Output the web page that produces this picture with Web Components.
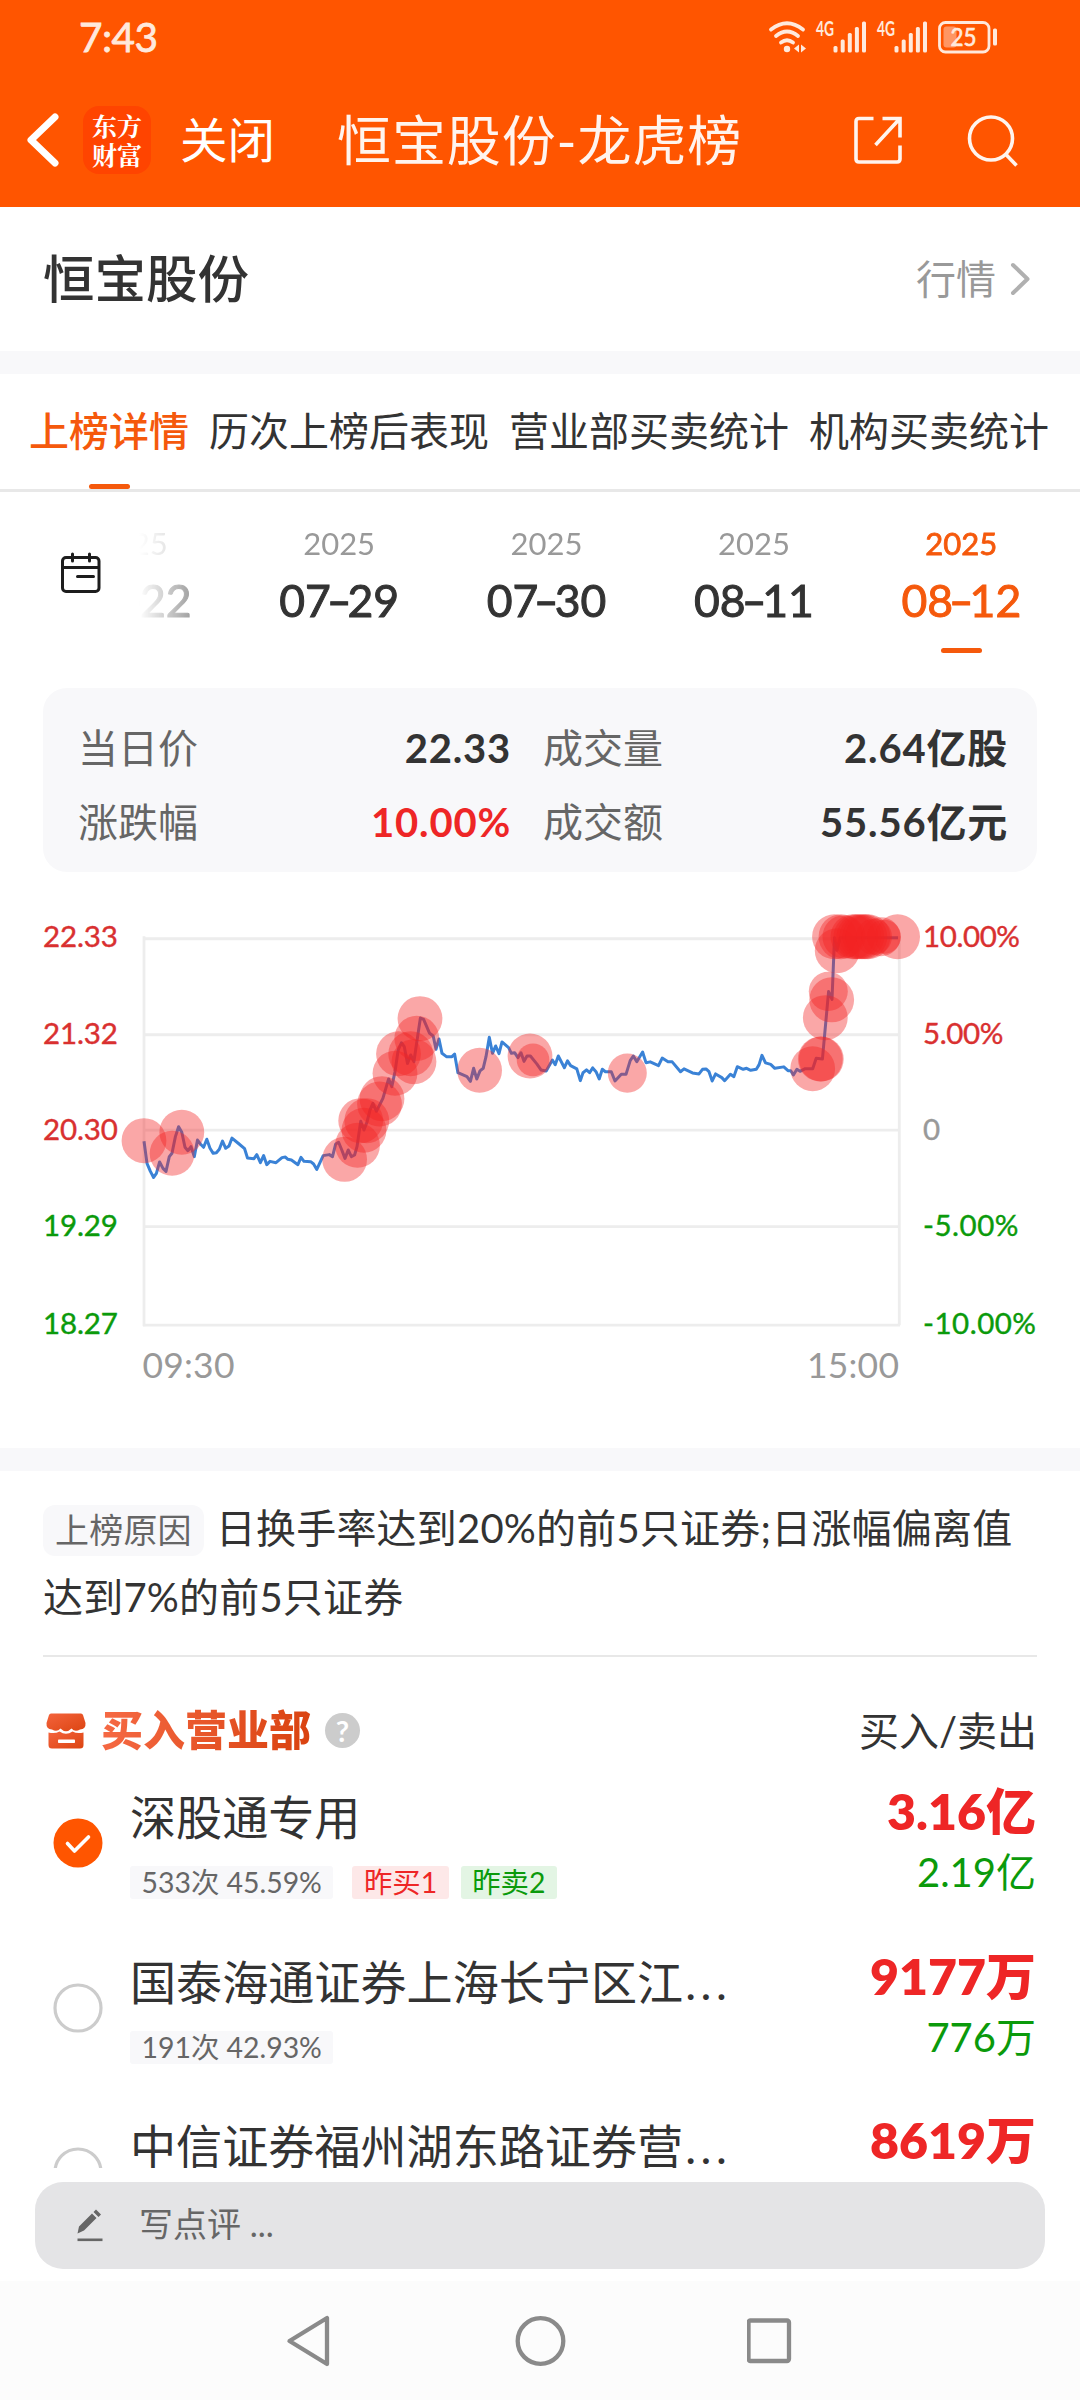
<!DOCTYPE html>
<html lang="zh-CN">
<head>
<meta charset="UTF-8">
<meta name="viewport" content="width=device-width, initial-scale=1.0">
<title>恒宝股份-龙虎榜</title>
<style>
  html, body {
    margin: 0;
    padding: 0;
  }

  body {
    --orange: #ff5500;
    --accent: #f5590c;
    --red: #ee2626;
    --green: #0b9a0b;
    --text: #333;
    --muted: #999;
    --panel: #f8f8fa;
    width: 1080px;
    height: 2400px;
    overflow: hidden;
    background: #fff;
    color: var(--text);
    font-family: Lato, "Noto Sans CJK SC", sans-serif;
    font-variant-ligatures: none;
  }
</style>
</head>
<body>
<lhb-app></lhb-app>

<script>
// Small helper: attach an open shadow root and fill it
class BaseElement extends HTMLElement {
    constructor() {
        super();
        this.attachShadow({ mode: 'open' });
    }

    connectedCallback() {
        this.shadowRoot.innerHTML = this.render();
    }
}

class StatusBar extends BaseElement {
    signal() {
        return `
      <svg width="51" height="32" viewBox="0 0 51 32" fill="#ffe9dc">
        <text x="0" y="14.5" font-size="20" font-weight="700" textLength="18" lengthAdjust="spacingAndGlyphs">4G</text>
        <rect x="17.5" y="25" width="4" height="6.5" rx="1.5"/>
        <rect x="24.7" y="18.5" width="4" height="13" rx="1.5"/>
        <rect x="31.8" y="12" width="4" height="19.5" rx="1.5"/>
        <rect x="38.9" y="6" width="4" height="25.5" rx="1.5"/>
        <rect x="46" y="0.5" width="4" height="31" rx="1.5"/>
      </svg>`;
    }

    render() {
        return `
      <style>
        :host {
          display: flex;
          align-items: center;
          justify-content: space-between;
          height: 74px;
          padding: 0 81px 0 79px;
          background: var(--orange);
          color: #ffe9dc;
        }
        .time { font-size: 40.5px; line-height: 74px; letter-spacing: -0.5px; -webkit-text-stroke: 0.8px; }
        .icons { display: flex; gap: 10px; }
        svg { display: block; overflow: visible; }
      </style>
      <span class="time">7:43</span>
      <div class="icons">
        <svg width="37" height="32" viewBox="0 0 37 32" fill="none" stroke="#ffe9dc" stroke-width="3.8" stroke-linecap="round">
          <path d="M2 8.5Q18 -4 34 8.5M7 15Q18 6 29 15M12 21.5Q18 17 24 21.5"/>
          <circle cx="18" cy="28" r="3.2" fill="#ffe9dc" stroke="none"/>
          <path d="M30 23.5v8l-5-4zM32 23.5v8l5-4z" fill="#ffe9dc" stroke="none"/>
        </svg>
        ${this.signal()}${this.signal()}
        <svg width="61" height="32" viewBox="0 0 61 32">
          <rect x="1.5" y="1.5" width="49.5" height="29.5" rx="6" fill="none" stroke="#ffe9dc" stroke-width="2.8"/>
          <rect x="5.5" y="5.5" width="13" height="21" rx="3" fill="#ff9663"/>
          <text x="12.5" y="25" font-size="25" fill="#ffe9dc" stroke="#ffe9dc" stroke-width="0.7" textLength="26" lengthAdjust="spacingAndGlyphs">25</text>
          <rect x="55" y="7.5" width="4" height="17" rx="1.5" fill="#ffe9dc"/>
        </svg>
      </div>`;
    }
}
customElements.define('status-bar', StatusBar);

class AppHeader extends BaseElement {
    render() {
        return `
      <style>
        :host {
          display: flex;
          align-items: center;
          height: 133px;
          box-sizing: border-box;
          padding: 0 0 1px 24px;
          background: var(--orange);
          color: #fff;
          line-height: 70px;
        }
        svg { display: block; flex: none; }
        .logo {
          display: flex;
          flex-direction: column;
          justify-content: center;
          width: 68px;
          height: 68px;
          margin-left: 23px;
          border-radius: 16px;
          background: #ff4400;
          font-family: "Noto Serif CJK SC", "Noto Sans CJK SC", sans-serif;
          font-size: 25px;
          font-weight: 700;
          line-height: 30px;
          text-align: center;
        }
        .logo span { margin-top: -1px; }
        .close { margin-left: 29px; font-size: 47.5px; white-space: nowrap; }
        .title { flex: 1; margin: 2px 0 0 62px; font-size: 54px; letter-spacing: 0.9px; white-space: nowrap; color: #fff4ee; }
        .actions { display: flex; align-items: center; gap: 65px; padding-right: 60px; }
      </style>
      <svg width="36" height="58" viewBox="0 0 36 58" fill="none" stroke="#fff" stroke-width="7" stroke-linecap="round" stroke-linejoin="round">
        <path d="M31 6L7 29l24 23"/>
      </svg>
      <div class="logo"><span>东方</span><span>财富</span></div>
      <span class="close">关闭</span>
      <span class="title"><slot></slot></span>
      <div class="actions">
        <svg width="48" height="49" viewBox="0 0 48 49" fill="none" stroke="#fff4ee" stroke-width="3.6">
          <path d="M19.500 2.500H5Q2 2.500 2 5.500V43Q2 46 5 46H43Q46 46 46 43V29.500M28.500 2.500H46V21.500M45 3.500L21.500 29"/>
        </svg>
        <svg width="53" height="53" viewBox="0 0 53 53" fill="none" stroke="#fff4ee" stroke-width="3.6">
          <circle cx="24" cy="24.500" r="21.500"/>
          <path d="M38.500 40L49.500 51.500"/>
        </svg>
      </div>`;
    }
}
customElements.define('app-header', AppHeader);

class StockTitle extends BaseElement {
    render() {
        return `
      <style>
        :host {
          display: flex;
          align-items: center;
          justify-content: space-between;
          height: 144px;
          box-sizing: border-box;
          padding: 0 49px 0 43px;
          line-height: 70px;
        }
        .name { margin-top: -2px; font-size: 51.5px; font-weight: 500; }
        .more { display: flex; align-items: center; gap: 14px; font-size: 40px; color: var(--muted); }
      </style>
      <span class="name"><slot></slot></span>
      <span class="more">行情
        <svg width="21" height="34" viewBox="0 0 21 34" fill="none" stroke="#b0b0b0" stroke-width="4" stroke-linecap="round" stroke-linejoin="round">
          <path d="M3 3l14.500 14L3 31"/>
        </svg>
      </span>`;
    }
}
customElements.define('stock-title', StockTitle);

class SectionGap extends BaseElement {
    render() {
        return `<style>:host { display: block; height: 23px; background: var(--panel); }</style>`;
    }
}
customElements.define('section-gap', SectionGap);

class TabBar extends BaseElement {
    render() {
        const tabs = this.getAttribute('tabs').split(',');
        return `
      <style>
        :host {
          display: flex;
          gap: 20px;
          height: 118px;
          box-sizing: border-box;
          padding: 0 29px;
          border-bottom: 3px solid #e8e8e8;
          font-size: 40px;
          white-space: nowrap;
        }
        .tab { display: flex; flex-direction: column; align-items: center; }
        .label { height: 110px; line-height: 115px; }
        .active { color: var(--accent); font-weight: 500; }
        .active::after { content: ""; width: 41px; height: 5px; border-radius: 3px; background: var(--accent); }
      </style>
      ${tabs.map((t, i) => `<div class="tab ${i === 0 ? 'active' : ''}"><span class="label">${t}</span></div>`).join('')}`;
    }
}
customElements.define('tab-bar', TabBar);

class DateItem extends BaseElement {
    render() {
        const [month, day] = this.getAttribute('day').split('-');
        return `
      <style>
        :host {
          display: flex;
          flex-direction: column;
          align-items: center;
          flex: none;
          width: 207.4px;
          padding-top: 33px;
        }
        .year { font-size: 31px; line-height: 36px; color: var(--muted); }
        .day { margin-top: 13px; font-size: 44.5px; line-height: 52px; -webkit-text-stroke: 1px; }
        /* the dash is drawn a little wider than the font's own hyphen */
        .dash { display: inline-block; transform: scaleX(1.5); }
        :host([active]) .year { color: var(--accent); -webkit-text-stroke: 0.8px; }
        :host([active]) .day { color: var(--accent); }
        :host([active])::after { content: ""; width: 41px; height: 5px; margin-top: 22px; border-radius: 3px; background: var(--accent); }
      </style>
      <span class="year">${this.getAttribute('year')}</span>
      <span class="day">${month}<span class="dash">-</span>${day}</span>`;
    }
}
customElements.define('date-item', DateItem);

class DateStrip extends BaseElement {
    render() {
        return `
      <style>
        :host { display: flex; height: 196px; }
        .calendar { flex: none; margin: 59px 37px 0 59px; }
        .scroller {
          display: flex;
          flex: 1;
          justify-content: flex-end;
          overflow: hidden;
          padding-right: 15px;
          -webkit-mask-image: linear-gradient(to right, transparent, #000 112px);
          mask-image: linear-gradient(to right, transparent, #000 112px);
        }
      </style>
      <svg class="calendar" width="43" height="43" viewBox="0 0 43 43" fill="none" stroke="#1d1d1d" stroke-width="3" stroke-linecap="round">
        <rect x="3.500" y="6.500" width="36.500" height="34" rx="3.500"/>
        <path d="M4 16.500H39M13.500 3v7M30.500 3v7M18.500 25.500H34.500"/>
      </svg>
      <div class="scroller"><slot></slot></div>`;
    }
}
customElements.define('date-strip', DateStrip);

class SummaryCard extends BaseElement {
    render() {
        return `
      <style>
        :host {
          display: grid;
          grid-template-columns: 433px 1fr;
          grid-auto-rows: 74px;
          column-gap: 32px;
          height: 184px;
          box-sizing: border-box;
          margin: 0 43px;
          padding: 23px 29px 0 35px;
          border-radius: 24px;
          background: var(--panel);
          font-size: 40px;
          line-height: 74px;
        }
        div { display: flex; justify-content: space-between; }
        span { color: #666; }
        b { font-weight: 700; letter-spacing: 0.8px; }
        .up { color: var(--red); }
      </style>
      <div><span>当日价</span><b>22.33</b></div>
      <div><span>成交量</span><b>2.64亿股</b></div>
      <div><span>涨跌幅</span><b class="up">10.00%</b></div>
      <div><span>成交额</span><b>55.56亿元</b></div>`;
    }
}
customElements.define('summary-card', SummaryCard);

// Intraday price line, x/y in chart units
const PRICE_LINE = [
    144,250, 147,272, 150.4,280, 153.6,286, 156.4,282, 159.6,270.6, 163,277, 166,280, 169.3,265.3, 172,262,
    175.4,245.4, 178.6,235.5, 181.8,241, 185,256, 187.9,259.4, 191,255.4, 194.3,265.3, 197.5,248.8, 200.4,252.7,
    203.6,256, 206.8,248, 210,257, 213.2,262, 216.4,261.4, 219.3,258, 222.5,249.8, 225.7,257, 229,254.7,
    232,246.8, 238.2,252, 244.6,257.4, 247.5,266.7, 254,267.3, 256.8,263.3, 260.4,271.3, 263.6,264.3, 266.8,273.3,
    270,270, 276,271.3, 282,266.3, 285.4,265.7, 287.9,268, 291.4,268.7, 297.9,273.3, 301,266, 304,270,
    310.7,270.3, 313.6,272.6, 316.8,278, 323.2,264.3, 329.3,263.3, 332.5,265.3, 335.7,252.7, 338.6,251,
    341.8,258.7, 345,267, 348.2,258.7, 351.4,265.3, 354.6,263.7, 357,255.4, 360.7,230.2, 364,238.8, 367.1,230.5,
    370,219, 372.9,212.3, 376.4,220.2, 382.9,207.3, 388.6,188, 391.8,195.7, 395,180.8, 398.2,159.2, 401.4,152,
    404.3,155.9, 407.5,172.5, 410.7,164.2, 413.9,170.8, 417.1,149.3, 420.4,127.4, 423.6,128.7, 429.6,142.6,
    433.2,145.3, 436,158.5, 439,148.3, 442,162.5, 446.4,165.8, 452,165.8, 454.6,163.2, 457.9,181.8, 467,185.7,
    470.4,190.4, 473.6,177.4, 476.8,188, 480,180, 483.2,177.4, 486,165.8, 489.3,146.6, 492.5,162.5, 495.7,155.2,
    499,162.9, 502,151.2, 508.6,156.9, 511.4,162.5, 514.6,161.9, 517.9,166.8, 521,161.9, 524,170.5, 527,165.2,
    530.4,165.2, 536.8,173, 541,179, 546.2,180, 552.4,169.2, 555.2,173.8, 558.3,165.2, 564.4,176.8, 567.5,170,
    570.6,174.8, 576.8,178, 580.3,189.7, 583,181.8, 586.5,179, 589.6,181.8, 592.7,177, 596,180.8, 599.2,188,
    602.3,178.4, 605.4,180.8, 611.3,180.8, 615,190, 621.3,183.4, 626,183.4, 630.2,169.8, 633.3,165.2, 636.8,170.8,
    642.6,161.2, 646,171.8, 650.2,171, 658.5,174.8, 662.2,167.2, 668,171, 672.2,171, 680.5,180.8, 684,178,
    692.5,182, 699,183, 702.5,178.4, 706,178, 709,180.8, 712.2,190, 715.6,183, 721.8,186.7, 724.6,189.7,
    730.4,183.4, 733.9,185.7, 737.3,175.8, 743.2,178.4, 746.6,177.4, 750.7,179.4, 756.3,178.4, 759,174,
    762,164.5, 765.5,172, 770.7,173.5, 774.8,177.4, 783.8,176, 788,179.8, 790.7,179.8, 793.4,184, 796.9,178.4,
    800,180.4, 805.2,177.8, 812.7,177.8, 816.2,167.5, 822.4,168.2, 828.6,101, 832,108.8, 834.5,47.4, 837,60,
    840,47.4, 898,47.4,
];

// Large-order markers: [x, y, radius]
const MARKERS = [
    [144, 249.4], [172.1, 262], [181.8, 241], [344.6, 268], [357.5, 254], [360.7, 229.5], [364, 239], [366.8, 229.5],
    [382, 207.6], [379.5, 213], [395, 182.4], [398.5, 163], [410.7, 163], [414, 170.8], [416.8, 147.6], [420, 128],
    [479.6, 179.4], [530, 165.2], [533, 169, 16.3], [627.3, 182.2, 19.5], [812.7, 177.8], [821.3, 168.2],
    [820.3, 168.2], [825.3, 127], [828.3, 100.8, 19.5], [831.7, 109.3], [837.2, 60.4], [834.5, 46.5],
    [841, 46.5], [844, 46.5, 21.5], [853, 46.5], [856, 46.5], [859, 46.5], [862, 46.5], [865, 46.5], [868, 46.5],
    [874, 46.5, 18], [881, 46.5, 19.5], [884, 46.5, 17], [897.6, 46.5],
];

class PriceChart extends BaseElement {
    render() {
        const rows = [48.5, 144, 239, 335, 433];
        const textY = [56.3, 153, 248.7, 344.7, 441.3];
        // [price, percent, percent text width]
        const labels = [
            ['22.33', '10.00%', 97],
            ['21.32', '5.00%', 80.5],
            ['20.30', '0', 17],
            ['19.29', '-5.00%', 95.5],
            ['18.27', '-10.00%', 113],
        ];
        const leftColors = ['#d93030', '#d93030', '#d93030', '#0b9a0b', '#0b9a0b'];
        const rightColors = ['#d93030', '#d93030', '#999', '#0b9a0b', '#0b9a0b'];
        return `
      <style>
        :host { display: block; height: 576px; }
        svg { display: block; margin-top: 18px; }
      </style>
      <svg width="1080" height="540" viewBox="0 0 1080 537.3" preserveAspectRatio="none" font-size="29.5">
        <g stroke="#ededed" stroke-width="2.8">
          ${rows.map(y => `<path d="M143 ${y}H900"/>`).join('')}
          <path d="M144 46V434M899.3 46V433"/>
        </g>
        <g stroke-width="0.4">
          ${labels.map(([price, pct, w], i) => `
          <text x="43" y="${textY[i]}" fill="${leftColors[i]}" stroke="${leftColors[i]}" textLength="75">${price}</text>
          <text x="923" y="${textY[i]}" fill="${rightColors[i]}" stroke="${rightColors[i]}" textLength="${w}">${pct}</text>`).join('')}
        </g>
        <g font-size="35.5" fill="#999">
          <text x="142.5" y="485.5" textLength="92">09:30</text>
          <text x="899" y="485.5" text-anchor="end" textLength="92">15:00</text>
        </g>
        <polyline points="${PRICE_LINE.join(' ')}" fill="none" stroke="#3a82d6" stroke-width="3" stroke-linejoin="round"/>
        <g fill="#f22424" fill-opacity="0.4">
          ${MARKERS.map(([x, y, r = 22.4]) => `<circle cx="${x}" cy="${y}" r="${r}"/>`).join('')}
        </g>
      </svg>`;
    }
}
customElements.define('price-chart', PriceChart);

class ReasonBox extends BaseElement {
    render() {
        return `
      <style>
        :host {
          display: block;
          height: 186px;
          box-sizing: border-box;
          margin: 0 38px 0 43px;
          padding-top: 23px;
          font-size: 40px;
          line-height: 69px;
          letter-spacing: 0.2px;
        }
        .text { height: 161px; margin-right: 5px; border-bottom: 2px solid #e8e8e8; }
        .badge {
          display: inline-block;
          height: 51px;
          margin-right: 12px;
          padding: 0 12px;
          border-radius: 12px;
          background: var(--panel);
          color: #666;
          font-size: 34px;
          line-height: 49px;
        }
      </style>
      <div class="text"><span class="badge">上榜原因</span><slot></slot></div>`;
    }
}
customElements.define('reason-box', ReasonBox);

class BrokerHeading extends BaseElement {
    render() {
        return `
      <style>
        :host {
          display: flex;
          align-items: center;
          height: 106px;
          box-sizing: border-box;
          margin: 0 43px;
          padding: 41px 0 0 3px;
          font-size: 40px;
        }
        svg { display: block; flex: none; }
        .title {
          margin: -5px 0 0 15px;
          font-family: "Noto Sans CJK SC", sans-serif;
          font-size: 42px;
          font-weight: 900;
          line-height: 50px;
          background: linear-gradient(100deg, #f66a45, #d9420f);
          -webkit-background-clip: text;
          background-clip: text;
          color: transparent;
          white-space: nowrap;
        }
        .help {
          width: 35px;
          height: 35px;
          margin-left: 14px;
          border-radius: 50%;
          background: #ccc;
          color: #fff;
          font-size: 29px;
          font-weight: 700;
          line-height: 35px;
          text-align: center;
        }
        .sides { margin-left: auto; line-height: 50px; white-space: nowrap; }
      </style>
      <svg width="40" height="36" viewBox="0 0 40 36">
        <defs>
          <linearGradient id="g" x1="0" y1="0" x2="1" y2="1">
            <stop offset="0" stop-color="#f4633c"/>
            <stop offset="1" stop-color="#dc4512"/>
          </linearGradient>
        </defs>
        <path fill="url(#g)" d="M5 .5H35Q36.500 .5 37 2L39.500 10Q40 16 34 16.500Q29 19.500 25.500 15.500Q20 21 14.500 15.500Q11 19.500 6 16.500Q0 16 .5 10L3 2Q3.500 .5 5 .5z"/>
        <path fill="url(#g)" d="M2.500 19.500Q9 21 13.500 18.500Q20 23 26.500 18.500Q31 21 37.500 19.500V32Q37.500 35.500 34 35.500H6Q2.500 35.500 2.500 32z"/>
        <rect x="12" y="26.500" width="17" height="3.500" rx=".8" fill="#fff"/>
      </svg>
      <span class="title"><slot></slot></span>
      <span class="help">?</span>
      <span class="sides">买入/卖出</span>`;
    }
}
customElements.define('broker-heading', BrokerHeading);

class BrokerTag extends BaseElement {
    render() {
        return `
      <style>
        :host {
          display: block;
          height: 33px;
          padding: 0 11.5px;
          border-radius: 3px;
          background: var(--panel);
          color: #666;
          font-size: 28.4px;
          line-height: 33px;
          white-space: nowrap;
        }
        :host([kind="buy"]) { margin-left: 19px; background: #fde8e8; color: var(--red); }
        :host([kind="sell"]) { margin-left: 12px; background: #e3f5e4; color: var(--green); }
      </style>
      <slot></slot>`;
    }
}
customElements.define('broker-tag', BrokerTag);

class BrokerRow extends BaseElement {
    render() {
        const checked = this.hasAttribute('checked');
        const mark = checked
            ? '<circle cx="25" cy="25" r="24.5" fill="#ff5500"/><path d="M14.5 25.5l7 7.5 14-14" fill="none" stroke="#fff" stroke-width="3.6" stroke-linecap="round" stroke-linejoin="round"/>'
            : '<circle cx="25" cy="25" r="23" fill="none" stroke="#ccc" stroke-width="3.2"/>';
        return `
      <style>
        :host {
          display: flex;
          flex: none;
          height: 164.5px;
          margin: 0 44px 0 53px;
        }
        svg { flex: none; margin-top: 55px; }
        .info { flex: 1; margin-left: 27px; padding-top: 24px; }
        .name { height: 60px; font-size: 46.1px; line-height: 60px; white-space: nowrap; }
        .tags { display: flex; margin-top: 19px; }
        .amounts { display: flex; flex-direction: column; align-items: flex-end; padding-top: 18px; white-space: nowrap; }
        .buy { color: var(--red); font-size: 50px; font-weight: 800; line-height: 60px; }
        .sell { color: var(--green); font-size: 40px; line-height: 50px; margin-top: 6px; }
      </style>
      <svg width="50" height="50" viewBox="0 0 50 50">${mark}</svg>
      <div class="info">
        <div class="name"><slot name="name"></slot></div>
        <div class="tags"><slot></slot></div>
      </div>
      <div class="amounts">
        <span class="buy">${this.getAttribute('buy')}</span>
        <span class="sell">${this.getAttribute('sell') || ''}</span>
      </div>`;
    }
}
customElements.define('broker-row', BrokerRow);

class CommentBar extends BaseElement {
    render() {
        return `
      <style>
        :host {
          display: flex;
          align-items: center;
          flex: none;
          height: 87px;
          margin: 14px 35px 12px;
          border-radius: 28px;
          background: #e4e4e6;
          color: #666;
          font-size: 34px;
        }
        svg { margin: 0 35px 0 41px; }
        span { line-height: 83px; height: 87px; }
      </style>
      <svg width="28" height="34" viewBox="0 0 28 34" fill="#666">
        <path d="M1.500 24.500L3 17.500L16 4.500L20.500 9L8 21.500zM17.500 3L20 .5L25 5.500L22.500 8z"/>
        <rect x="1.500" y="29.500" width="25" height="2.600"/>
      </svg>
      <span><slot></slot></span>`;
    }
}
customElements.define('comment-bar', CommentBar);

class NavBar extends BaseElement {
    render() {
        return `
      <style>
        :host {
          display: flex;
          justify-content: space-between;
          flex: none;
          height: 119px;
          box-sizing: border-box;
          padding: 33px 287px 0 286px;
          background: #fcfcfc;
        }
      </style>
      <svg width="46" height="54" viewBox="0 0 46 54" fill="none" stroke="#8a8a8a" stroke-width="4.3" stroke-linejoin="round">
        <path d="M3.500 27L41 4V50z"/>
      </svg>
      <svg width="54" height="54" viewBox="0 0 54 54" fill="none" stroke="#8a8a8a" stroke-width="4.3">
        <circle cx="27.500" cy="27" r="22.800"/>
      </svg>
      <svg width="46" height="54" viewBox="0 0 46 54" fill="none" stroke="#8a8a8a" stroke-width="4.3">
        <rect x="1.500" y="6.500" width="40.500" height="40.500" rx="2"/>
      </svg>`;
    }
}
customElements.define('nav-bar', NavBar);

class LhbApp extends BaseElement {
    render() {
        return `
      <style>
        :host { display: flex; flex-direction: column; height: 2400px; }
        .content { display: flex; flex-direction: column; height: 1961px; flex: none; overflow: hidden; }
        .content > * { flex: none; }
        .dots { margin-left: 2px; letter-spacing: 4.5px; }
      </style>
      <status-bar></status-bar>
      <app-header>恒宝股份-龙虎榜</app-header>
      <div class="content">
        <stock-title>恒宝股份</stock-title>
        <section-gap></section-gap>
        <tab-bar tabs="上榜详情,历次上榜后表现,营业部买卖统计,机构买卖统计"></tab-bar>
        <date-strip>
          <date-item year="2025" day="07-22"></date-item>
          <date-item year="2025" day="07-29"></date-item>
          <date-item year="2025" day="07-30"></date-item>
          <date-item year="2025" day="08-11"></date-item>
          <date-item year="2025" day="08-12" active></date-item>
        </date-strip>
        <summary-card></summary-card>
        <price-chart></price-chart>
        <section-gap></section-gap>
        <reason-box>日换手率达到20%的前5只证券;日涨幅偏离值达到7%的前5只证券</reason-box>
        <broker-heading>买入营业部</broker-heading>
        <broker-row checked buy="3.16亿" sell="2.19亿">
          <span slot="name">深股通专用</span>
          <broker-tag>533次 45.59%</broker-tag>
          <broker-tag kind="buy">昨买1</broker-tag>
          <broker-tag kind="sell">昨卖2</broker-tag>
        </broker-row>
        <broker-row buy="9177万" sell="776万">
          <span slot="name">国泰海通证券上海长宁区江<span class="dots">...</span></span>
          <broker-tag>191次 42.93%</broker-tag>
        </broker-row>
        <broker-row buy="8619万">
          <span slot="name">中信证券福州湖东路证券营<span class="dots">...</span></span>
        </broker-row>
      </div>
      <comment-bar>写点评 ...</comment-bar>
      <nav-bar></nav-bar>`;
    }
}
customElements.define('lhb-app', LhbApp);
</script>
</body>
</html>
